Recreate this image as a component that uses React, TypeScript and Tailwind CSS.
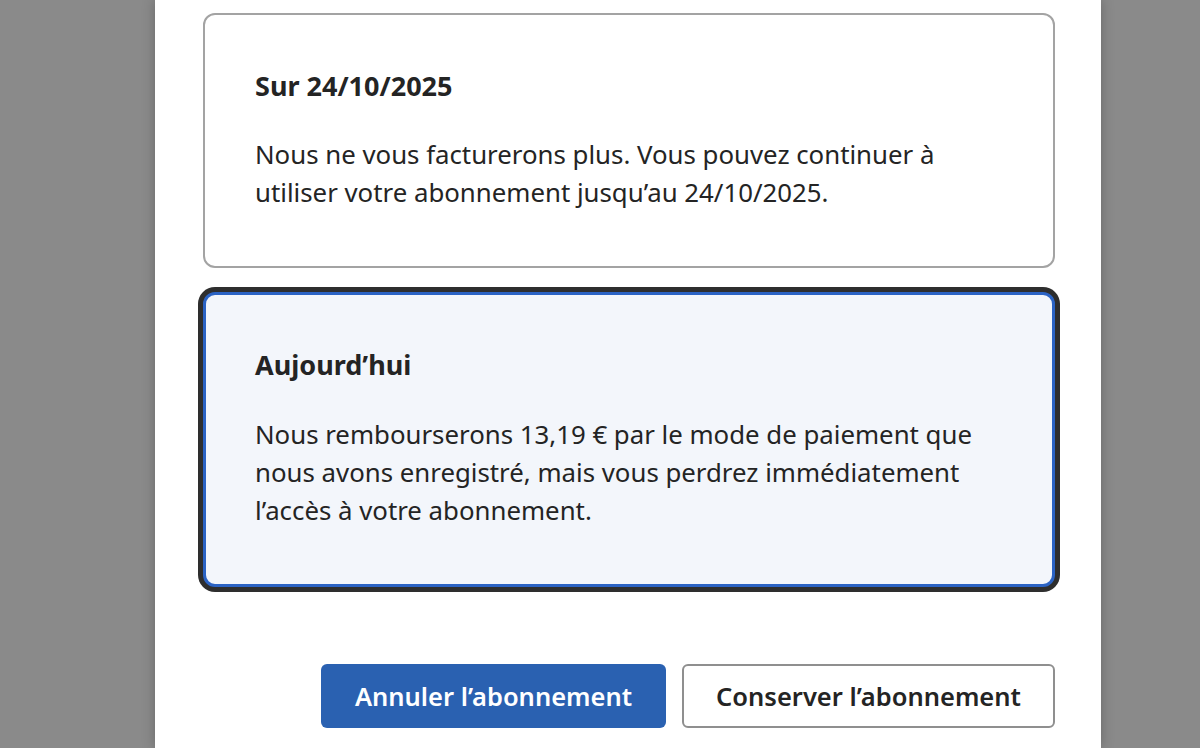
import React from "react";

export default function App() {
  return (
    <div
      className="h-[748px] w-[1200px] overflow-hidden bg-[#8a8a8a]"
      style={{ fontFamily: '"Noto Sans", "Open Sans", sans-serif' }}
    >
      <div className="ml-[155px] h-full w-[946px] bg-white pl-[48px] pr-[46px] pt-[13px] text-[#242424] shadow-[0_0_12px_rgba(0,0,0,0.25)]">
        <div className="rounded-[12px] border-2 border-[#a3a3a3] bg-white px-[50px] pb-[55px] pt-[55px]">
          <h2 className="mb-[33px] text-[27px] font-bold leading-[32px]">Sur 24/10/2025</h2>
          <p className="text-[25.8px] leading-[38px]">
            Nous ne vous facturerons plus. Vous pouvez continuer à<br />
            utiliser votre abonnement jusqu’au 24/10/2025.
          </p>
        </div>

        <div className="mt-[24px] rounded-[12px] border-[3px] border-[#2b63c4] bg-[#f3f6fb] px-[49px] pb-[55px] pt-[54px] shadow-[0_0_0_5px_#2e2e2e]">
          <h2 className="mb-[34px] text-[27px] font-bold leading-[32px]">Aujourd’hui</h2>
          <p className="text-[25.8px] leading-[38px]">
            Nous rembourserons 13,19 € par le mode de paiement que<br />
            nous avons enregistré, mais vous perdrez immédiatement<br />
            l’accès à votre abonnement.
          </p>
        </div>

        <div className="mt-[77px] flex justify-end gap-[16px]">
          <button className="h-[64px] w-[345px] rounded-[6px] bg-[#2a61b1] text-[25.5px] font-semibold text-white">
            Annuler l’abonnement
          </button>
          <button className="h-[64px] w-[373px] rounded-[6px] border-2 border-[#8f8f8f] bg-white text-[25.5px] font-semibold text-[#242424]">
            Conserver l’abonnement
          </button>
        </div>
      </div>
    </div>
  );
}
